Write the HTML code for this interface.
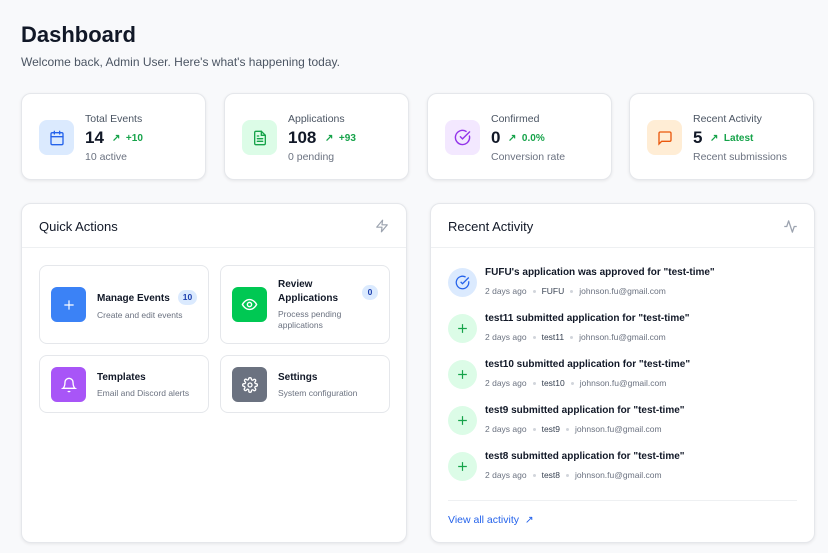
<!DOCTYPE html>
<html><head><style>
*{box-sizing:border-box;margin:0;padding:0}
body{width:828px;height:553px;overflow:hidden;background:#f8f9fb;font-family:"Liberation Sans",sans-serif;color:#111827;position:relative}
.abs{position:absolute}
h1{position:absolute;left:21px;top:22px;font-size:22px;font-weight:700;color:#111827}
.sub{left:21px;top:55px;font-size:12px;color:#4b5563}
.card{position:absolute;background:#fff;border:1px solid #e5e7eb;border-radius:10px;box-shadow:0 1px 3px rgba(0,0,0,.08)}
.stat{top:93px;width:185px;height:87px}
.ico{position:absolute;left:17px;top:26px;width:35px;height:35px;border-radius:8px;display:flex;align-items:center;justify-content:center}
.st .l{position:absolute;left:63px;top:19px;font-size:10.5px;color:#4b5563}
.st .n{position:absolute;left:63px;top:34px;font-size:17px;font-weight:700}
.st .d{position:absolute;font-size:10px;color:#16a34a;font-weight:700;top:39px}
.st .s{position:absolute;left:63px;top:57px;font-size:10.5px;color:#6b7280}
.panel{top:203px;height:340px}
.ph{position:absolute;left:17px;top:15px;font-size:13px;font-weight:500;color:#111827}
.hr{position:absolute;left:0;right:0;top:43px;border-top:1px solid #eef0f2}
.qa{position:absolute;width:170px;border:1px solid #e5e7eb;border-radius:8px;background:#fff}
.qi{position:absolute;left:11px;width:35px;height:35px;border-radius:6px;display:flex;align-items:center;justify-content:center}
.qt{position:absolute;left:57px;font-size:10px;font-weight:700;color:#111827;line-height:14px}
.qs{position:absolute;left:57px;font-size:8.5px;color:#6b7280;line-height:11px}
.badge{position:absolute;width:19px;height:15px;border-radius:8px;background:#dbeafe;color:#1e40af;font-size:8.5px;font-weight:700;text-align:center;line-height:15px}
.act{position:absolute;left:17px;width:340px;height:40px}
.act .c{position:absolute;left:0;top:2px;width:29px;height:29px;border-radius:50%;display:flex;align-items:center;justify-content:center}
.act .t{position:absolute;left:37px;top:1px;font-size:10px;font-weight:700;color:#111827}
.act .m{position:absolute;left:37px;top:20px;font-size:8.5px;color:#6b7280;white-space:nowrap}
.act .m b{font-weight:400;color:#374151}
.dot{display:inline-block;width:3px;height:3px;border-radius:50%;background:#d1d5db;margin:0 6px;vertical-align:middle}
</style></head><body>
<h1>Dashboard</h1>
<div class="abs sub">Welcome back, Admin User. Here's what's happening today.</div>

<div class="card stat st" style="left:21px">
<div class="ico" style="background:#dbeafe"><svg width="16" height="16" viewBox="0 0 24 24" fill="none" stroke="#2563eb" stroke-width="2" stroke-linecap="round"><rect x="3" y="4" width="18" height="18" rx="2"/><path d="M16 2v4M8 2v4M3 10h18"/></svg></div>
<div class="l">Total Events</div><div class="n">14</div><div class="d" style="left:90px">↗ &nbsp;+10</div><div class="s">10 active</div></div>
<div class="card stat st" style="left:224px">
<div class="ico" style="background:#dcfce7"><svg width="16" height="16" viewBox="0 0 24 24" fill="none" stroke="#16a34a" stroke-width="2" stroke-linecap="round"><path d="M14 2H6a2 2 0 0 0-2 2v16a2 2 0 0 0 2 2h12a2 2 0 0 0 2-2V8z"/><path d="M14 2v6h6M8 13h8M8 17h8M8 9h2"/></svg></div>
<div class="l">Applications</div><div class="n">108</div><div class="d" style="left:100px">↗ &nbsp;+93</div><div class="s">0 pending</div></div>
<div class="card stat st" style="left:427px">
<div class="ico" style="background:#f3e8ff"><svg width="17" height="17" viewBox="0 0 24 24" fill="none" stroke="#9333ea" stroke-width="2" stroke-linecap="round"><path d="M21.8 10A10 10 0 1 1 17 3.3"/><path d="m9 11 3 3L22 4"/></svg></div>
<div class="l">Confirmed</div><div class="n">0</div><div class="d" style="left:80px">↗ &nbsp;0.0%</div><div class="s">Conversion rate</div></div>
<div class="card stat st" style="left:629px">
<div class="ico" style="background:#ffedd5"><svg width="16" height="16" viewBox="0 0 24 24" fill="none" stroke="#ea580c" stroke-width="2" stroke-linecap="round"><path d="M21 15a2 2 0 0 1-2 2H7l-4 4V5a2 2 0 0 1 2-2h14a2 2 0 0 1 2 2z"/></svg></div>
<div class="l">Recent Activity</div><div class="n">5</div><div class="d" style="left:80px">↗ &nbsp;Latest</div><div class="s">Recent submissions</div></div>

<div class="card panel" style="left:21px;width:386px">
<div class="ph">Quick Actions</div>
<svg class="abs" style="left:353px;top:15px" width="14" height="14" viewBox="0 0 24 24" fill="none" stroke="#9ca3af" stroke-width="2" stroke-linejoin="round"><path d="M13 2 3 14h9l-1 8 10-12h-9z"/></svg>
<div class="hr"></div>
<div class="qa" style="left:17px;top:61px;height:79px"><div class="qi" style="top:21px;background:#3b82f6"><svg width="14" height="14" viewBox="0 0 24 24" stroke="#fff" stroke-width="2"><path d="M12 4v16M4 12h16"/></svg></div><div class="qt" style="top:26px">Manage Events</div><div class="qs" style="top:44px">Create and edit events</div><div class="badge" style="left:138px;top:24px">10</div></div>
<div class="qa" style="left:198px;top:61px;height:79px"><div class="qi" style="top:21px;background:#00c853"><svg width="17" height="17" viewBox="0 0 24 24" fill="none" stroke="#fff" stroke-width="2"><path d="M2 12s3.5-7 10-7 10 7 10 7-3.5 7-10 7S2 12 2 12z"/><circle cx="12" cy="12" r="3"/></svg></div><div class="qt" style="top:12px">Review<br>Applications</div><div class="qs" style="top:43px">Process pending<br>applications</div><div class="badge" style="left:141px;top:19px;width:16px">0</div></div>
<div class="qa" style="left:17px;top:151px;height:58px"><div class="qi" style="top:11px;background:#a855f7"><svg width="16" height="16" viewBox="0 0 24 24" fill="none" stroke="#fff" stroke-width="2"><path d="M6 8a6 6 0 0 1 12 0c0 7 3 9 3 9H3s3-2 3-9M10.3 21a1.9 1.9 0 0 0 3.4 0"/></svg></div><div class="qt" style="top:15px">Templates</div><div class="qs" style="top:32px">Email and Discord alerts</div></div>
<div class="qa" style="left:198px;top:151px;height:58px"><div class="qi" style="top:11px;background:#6b7280"><svg width="16" height="16" viewBox="0 0 24 24" fill="none" stroke="#fff" stroke-width="2"><circle cx="12" cy="12" r="3"/><path d="M19.4 15a1.7 1.7 0 0 0 .3 1.8l.1.1a2 2 0 1 1-2.8 2.8l-.1-.1a1.7 1.7 0 0 0-2.8 1.2V21a2 2 0 1 1-4 0v-.1A1.7 1.7 0 0 0 7 19.4l-.1.1a2 2 0 1 1-2.8-2.8l.1-.1A1.7 1.7 0 0 0 3 14H3a2 2 0 1 1 0-4h.1A1.7 1.7 0 0 0 4.6 7l-.1-.1a2 2 0 1 1 2.8-2.8l.1.1A1.7 1.7 0 0 0 10 3V3a2 2 0 1 1 4 0v.1a1.7 1.7 0 0 0 2.9 1.2l.1-.1a2 2 0 1 1 2.8 2.8l-.1.1A1.7 1.7 0 0 0 21 10h.1a2 2 0 1 1 0 4H21a1.7 1.7 0 0 0-1.6 1z"/></svg></div><div class="qt" style="top:15px">Settings</div><div class="qs" style="top:32px">System configuration</div></div>
</div>

<div class="card panel" style="left:430px;width:385px">
<div class="ph">Recent Activity</div>
<svg class="abs" style="left:352px;top:15px" width="15" height="15" viewBox="0 0 24 24" fill="none" stroke="#9ca3af" stroke-width="2" stroke-linejoin="round"><path d="M22 12h-4l-3 9L9 3l-3 9H2"/></svg>
<div class="hr"></div>
<div class="act" style="top:62px"><div class="c" style="background:#dbeafe"><svg width="15" height="15" viewBox="0 0 24 24" fill="none" stroke="#2563eb" stroke-width="2"><path d="M21.8 10A10 10 0 1 1 17 3.3"/><path d="m9 11 3 3L22 4"/></svg></div><div class="t">FUFU's application was approved for "test-time"</div><div class="m">2 days ago<span class="dot"></span><b>FUFU</b><span class="dot"></span>johnson.fu@gmail.com</div></div>
<div class="act" style="top:108px"><div class="c" style="background:#dcfce7"><svg width="13" height="13" viewBox="0 0 24 24" stroke="#16a34a" stroke-width="2.2"><path d="M12 4v16M4 12h16"/></svg></div><div class="t">test11 submitted application for "test-time"</div><div class="m">2 days ago<span class="dot"></span><b>test11</b><span class="dot"></span>johnson.fu@gmail.com</div></div>
<div class="act" style="top:154px"><div class="c" style="background:#dcfce7"><svg width="13" height="13" viewBox="0 0 24 24" stroke="#16a34a" stroke-width="2.2"><path d="M12 4v16M4 12h16"/></svg></div><div class="t">test10 submitted application for "test-time"</div><div class="m">2 days ago<span class="dot"></span><b>test10</b><span class="dot"></span>johnson.fu@gmail.com</div></div>
<div class="act" style="top:200px"><div class="c" style="background:#dcfce7"><svg width="13" height="13" viewBox="0 0 24 24" stroke="#16a34a" stroke-width="2.2"><path d="M12 4v16M4 12h16"/></svg></div><div class="t">test9 submitted application for "test-time"</div><div class="m">2 days ago<span class="dot"></span><b>test9</b><span class="dot"></span>johnson.fu@gmail.com</div></div>
<div class="act" style="top:246px"><div class="c" style="background:#dcfce7"><svg width="13" height="13" viewBox="0 0 24 24" stroke="#16a34a" stroke-width="2.2"><path d="M12 4v16M4 12h16"/></svg></div><div class="t">test8 submitted application for "test-time"</div><div class="m">2 days ago<span class="dot"></span><b>test8</b><span class="dot"></span>johnson.fu@gmail.com</div></div>
<div class="abs" style="left:17px;right:17px;top:296px;border-top:1px solid #eef0f2"></div>
<div class="abs" style="left:17px;top:310px;font-size:10.5px;color:#2563eb;font-weight:500">View all activity &nbsp;↗</div>
</div>
</body></html>
